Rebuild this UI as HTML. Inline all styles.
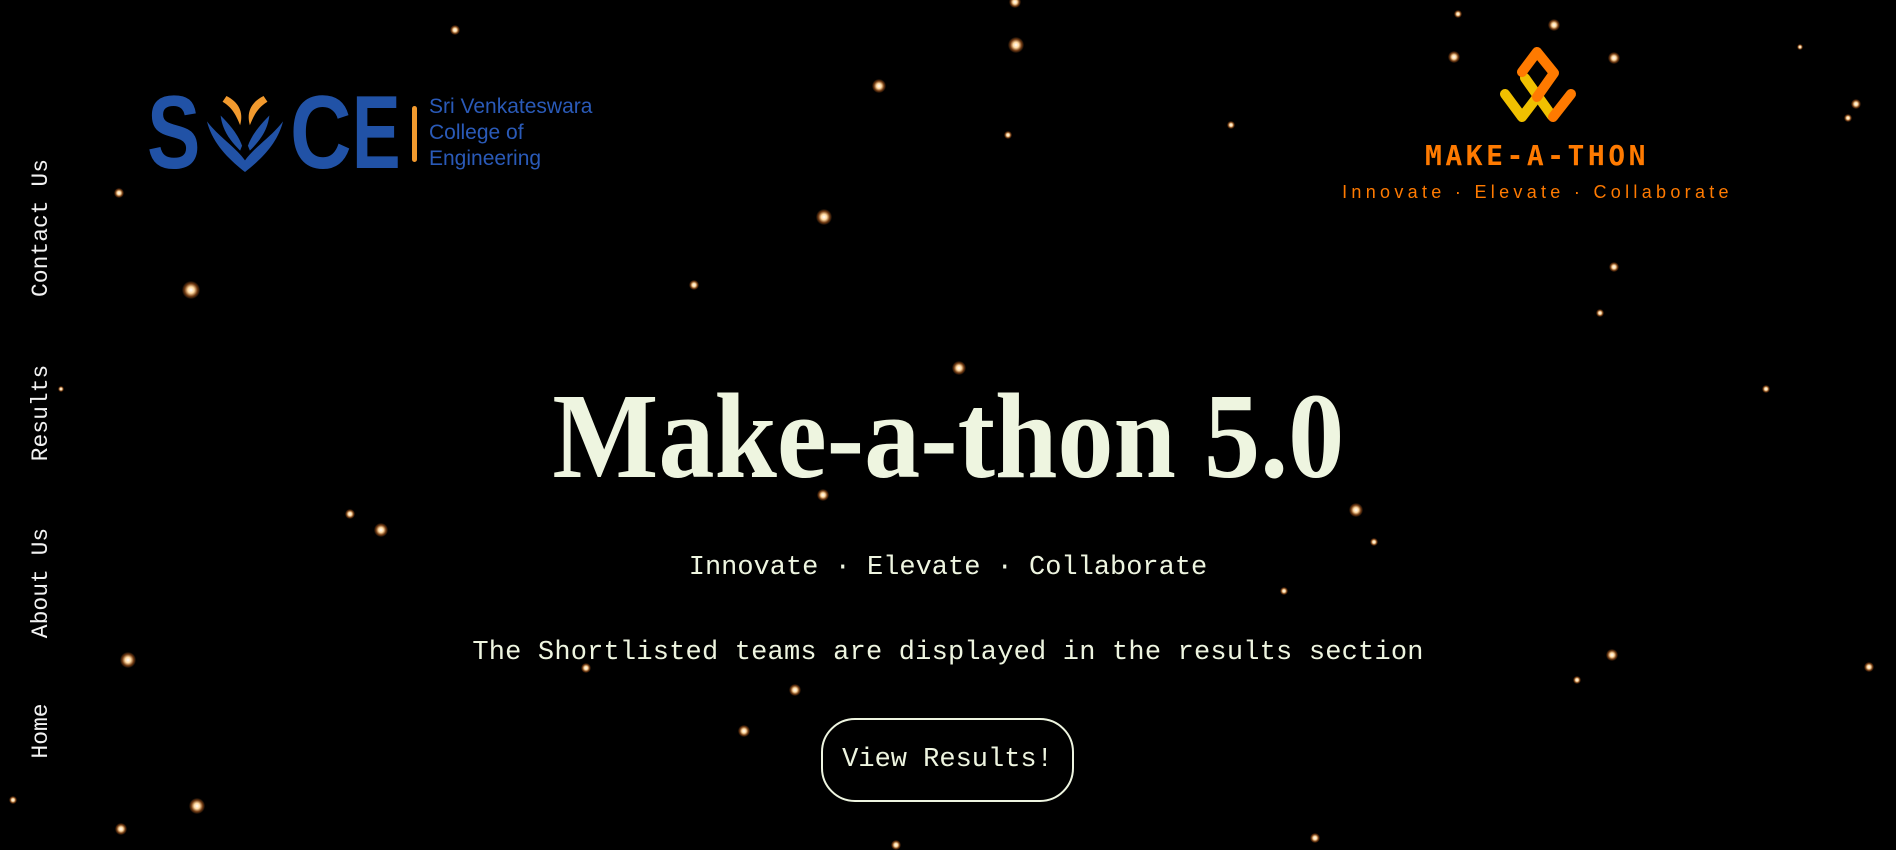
<!DOCTYPE html>
<html><head><meta charset="utf-8"><style>
html,body{margin:0;padding:0;background:#000;width:1896px;height:850px;overflow:hidden;position:relative;font-family:"Liberation Mono",monospace;}
.s{position:absolute;border-radius:50%;background:radial-gradient(circle,#fff 0,#ffd9a0 25%,rgba(230,120,40,.5) 50%,rgba(0,0,0,0) 72%);}
.nav{position:absolute;left:41px;color:#f2f2f2;font-size:23px;transform:translate(-50%,-50%) rotate(-90deg);white-space:nowrap;}
.c{position:absolute;left:0;width:1896px;text-align:center;color:#eef5e0;}
.L{position:absolute;top:0;font:bold 104px/110px 'Liberation Sans',sans-serif;color:#2152a6;transform-origin:0 0;}
</style></head><body>
<div id="stars"></div>
<div class="nav" style="top:228px">Contact Us</div>
<div class="nav" style="top:413px">Results</div>
<div class="nav" style="top:583px">About Us</div>
<div class="nav" style="top:731px">Home</div>

<!-- SVCE logo -->
<div style="position:absolute;left:145px;top:78px;height:110px;">
<span class="L" style="left:2px;transform:scaleX(0.77)">S</span>
<svg style="position:absolute;left:56px;top:16px" width="88" height="80" viewBox="0 0 90 82">
<path d="M45 80 C30 68 12 52 6 28 C18 44 35 54 45 68 C55 54 72 44 84 28 C78 52 60 68 45 80Z" fill="#2152a6"/>
<path d="M40 58 C30 48 22 38 20 22 C30 32 38 42 42 53Z" fill="#2152a6"/>
<path d="M50 58 C60 48 68 38 70 22 C60 32 52 42 48 53Z" fill="#2152a6"/>
<path d="M26 2 C38 8 44 18 40 32 C36 22 32 14 22 8Z" fill="#f29a2e"/>
<path d="M64 2 C52 8 46 18 50 32 C54 22 58 14 68 8Z" fill="#f29a2e"/>
</svg>
<span class="L" style="left:145px;transform:scaleX(0.82)">C</span>
<span class="L" style="left:207px;transform:scaleX(0.7)">E</span>
<div style="position:absolute;left:267px;top:28px;width:5px;height:56px;background:#f29a2e;border-radius:3px"></div>
<div style="position:absolute;left:284px;top:16px;font:21px/26px 'Liberation Sans',sans-serif;color:#2a5ab8;white-space:nowrap">Sri Venkateswara<br>College of<br>Engineering</div>
</div>

<!-- Make-a-thon logo -->
<svg style="position:absolute;left:1480px;top:40px" width="110" height="90" viewBox="0 0 110 90" fill="none" stroke-linecap="round" stroke-linejoin="round" stroke-width="10">
<path d="M25 54 L42 77 L58 56" stroke="#f0c000"/>
<path d="M45 38 L72 76" stroke="#f0c000"/>
<path d="M42 32 L57 12 L74 33 L57 57" stroke="#ff7a00"/>
<path d="M91 54 L73 77" stroke="#ff7a00"/>
</svg>
<div style="position:absolute;left:1405px;top:140px;width:264px;text-align:center;font:28px/32px 'DejaVu Sans Mono',monospace;font-weight:bold;color:#ff7a00;letter-spacing:3.5px;white-space:nowrap">MAKE-A-THON</div>
<div style="position:absolute;left:1320px;top:180px;width:435px;text-align:center;font:18px/24px 'Liberation Sans',sans-serif;color:#ff7a00;letter-spacing:4.3px;white-space:nowrap">Innovate · Elevate · Collaborate</div>

<div class="c" style="top:372px;"><span style="display:inline-block;font:bold 122px/130px 'Liberation Serif',serif;transform:scaleX(0.92);white-space:nowrap">Make-a-thon 5.0</span></div>
<div class="c" style="top:550px;font-size:27px;line-height:36px">Innovate · Elevate · Collaborate</div>
<div class="c" style="top:635px;font-size:27px;line-height:36px;letter-spacing:0.2px">The Shortlisted teams are displayed in the results section</div>
<div style="position:absolute;left:821px;top:718px;width:249px;height:80px;border:2px solid #eef5e0;border-radius:34px;color:#eef5e0;font-size:27px;line-height:80px;text-align:center">View Results!</div>

<script>
var p=[[455,30,5],[1015,2,6],[1554,25,6],[1016,45,8],[879,86,7],[1454,57,6],[1614,58,6],[1856,104,5],[1848,118,4],[119,193,5],[824,217,8],[1231,125,4],[1008,135,4],[191,290,9],[694,285,5],[1614,267,5],[1600,313,4],[959,368,7],[1766,389,4],[823,495,6],[350,514,5],[381,530,7],[1356,510,7],[1374,542,4],[128,660,8],[586,668,5],[1284,591,4],[1612,655,6],[1869,667,5],[795,690,6],[744,731,6],[197,806,8],[121,829,6],[1315,838,5],[896,845,5],[1458,14,4],[1800,47,3],[61,389,3],[13,800,4],[1577,680,4]];
var h='';p.forEach(function(a){var r=a[2]*2;h+='<div class="s" style="left:'+(a[0]-r/2)+'px;top:'+(a[1]-r/2)+'px;width:'+r+'px;height:'+r+'px"></div>'});
document.getElementById('stars').innerHTML=h;
</script>
</body></html>
